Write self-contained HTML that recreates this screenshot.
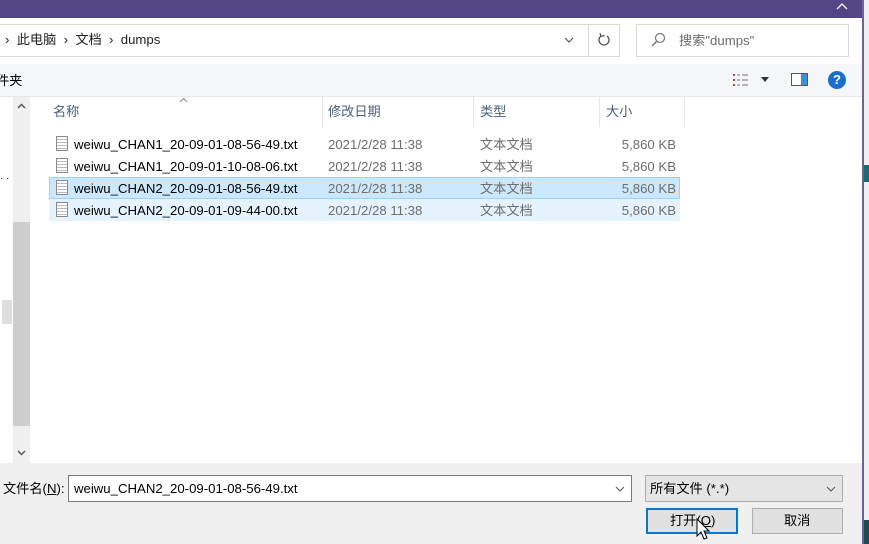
<!DOCTYPE html>
<html><head><meta charset="utf-8"><style>
*{margin:0;padding:0;box-sizing:border-box}
body{width:869px;height:544px;overflow:hidden;background:#fff;font-family:"Liberation Sans","Noto Sans CJK SC",sans-serif;font-size:13.2px;line-height:16px;color:#000;position:relative}
.a{position:absolute;white-space:nowrap}
.row{position:absolute;left:49px;width:631px;height:22px}
.row span{position:absolute;top:4px;white-space:nowrap}
.g{color:#6d6d6d}
.ic{position:absolute;left:7px;top:3px;width:12px;height:15px;border:1px solid #8a8a8a;background:repeating-linear-gradient(#fff 0 2px,#bbb 2px 3px);}
</style></head><body>
<div class="a" style="left:0;top:0;width:862px;height:18px;background:#544587"></div>
<svg class="a" style="left:836px;top:2px" width="12" height="8"><path d="M1 7 L6 2 L11 7" fill="none" stroke="#fff" stroke-width="1.3"/></svg>
<div class="a" style="left:862px;top:0;width:7px;height:544px;background:#f0f0f0;border-left:2px solid #6f5ea0"></div>
<div class="a" style="left:864px;top:165px;width:5px;height:17px;background:#1e6a72"></div>
<div class="a" style="left:864px;top:520px;width:5px;height:24px;background:#1e4a50"></div>
<div class="a" style="left:0;top:18px;width:862px;height:46px;background:#fff"></div>
<div class="a" style="left:-2px;top:24px;width:622px;height:33px;border:1px solid #d9d9d9"></div>
<div class="a" style="left:588px;top:24px;width:1px;height:33px;background:#d9d9d9"></div>
<div class="a" style="left:5px;top:32px;color:#222">›&nbsp; 此电脑 &nbsp;› &nbsp;文档 &nbsp;› &nbsp;dumps</div>
<svg class="a" style="left:564px;top:37px" width="10" height="7"><path d="M1 1 L5 5 L9 1" fill="none" stroke="#555" stroke-width="1.2"/></svg>
<svg class="a" style="left:597px;top:32px" width="14" height="16"><path d="M10 4 A5 5 0 1 1 4 4" fill="none" stroke="#555" stroke-width="1.3"/><path d="M3 1 L4 4.5 L7.5 3.5" fill="none" stroke="#555" stroke-width="1.2"/></svg>
<div class="a" style="left:636px;top:24px;width:213px;height:33px;border:1px solid #d9d9d9"></div>
<svg class="a" style="left:650px;top:32px" width="16" height="16"><circle cx="10" cy="6" r="4.5" fill="none" stroke="#777" stroke-width="1.2"/><path d="M7 9 L2 14" stroke="#777" stroke-width="1.4"/></svg>
<div class="a" style="left:679px;top:33px;color:#6d6d6d">搜索"dumps"</div>
<div class="a" style="left:0;top:64px;width:862px;height:33px;background:#f5f6f7;border-bottom:1px solid #e8e8e8"></div>
<div class="a" style="left:-4px;top:73px">件夹</div>
<svg class="a" style="left:733px;top:73px" width="18" height="14"><g fill="#c44"><rect x="0" y="1" width="2" height="2"/><rect x="0" y="6" width="2" height="2"/><rect x="0" y="11" width="2" height="2"/></g><g stroke="#777"><path d="M4 2h3M9 2h6M4 7h3M9 7h6M4 12h3M9 12h6"/></g></svg>
<div class="a" style="left:761px;top:77px;border:4px solid transparent;border-top:5px solid #333"></div>
<div class="a" style="left:791px;top:73px;width:17px;height:13px;border:1px solid #555;background:linear-gradient(90deg,#fff 0 9px,#3b8fdc 9px)"></div>
<div class="a" style="left:828px;top:71px;width:18px;height:18px;border-radius:50%;background:#1a6fce;color:#fff;font-weight:bold;font-size:13px;text-align:center;line-height:18px">?</div>
<div class="a" style="left:0;top:97px;width:33px;height:366px;background:#fff"></div>
<div class="a" style="left:13px;top:97px;width:17px;height:366px;background:#f0f0f0"></div>
<div class="a" style="left:13px;top:222px;width:17px;height:204px;background:#cdcdcd"></div>
<svg class="a" style="left:17px;top:103px" width="9" height="6"><path d="M1 5 L4.5 1.5 L8 5" fill="none" stroke="#555" stroke-width="1.5"/></svg>
<svg class="a" style="left:17px;top:450px" width="9" height="6"><path d="M1 1 L4.5 4.5 L8 1" fill="none" stroke="#555" stroke-width="1.5"/></svg>
<div class="a" style="left:2px;top:300px;width:10px;height:24px;background:#ddd"></div>
<div class="a" style="left:0;top:171px;font-size:10px">· ·</div>
<svg class="a" style="left:179px;top:97px" width="9" height="6"><path d="M1 5 L4.5 1.5 L8 5" fill="none" stroke="#888" stroke-width="1"/></svg>
<div class="a" style="left:53px;top:104px;color:#4c607a">名称</div>
<div class="a" style="left:322px;top:97px;width:1px;height:30px;background:#e5e5e5"></div>
<div class="a" style="left:328px;top:104px;color:#4c607a">修改日期</div>
<div class="a" style="left:473px;top:97px;width:1px;height:30px;background:#e5e5e5"></div>
<div class="a" style="left:480px;top:104px;color:#4c607a">类型</div>
<div class="a" style="left:599px;top:97px;width:1px;height:30px;background:#e5e5e5"></div>
<div class="a" style="left:606px;top:104px;color:#4c607a">大小</div>
<div class="a" style="left:684px;top:97px;width:1px;height:30px;background:#e5e5e5"></div>
<div class="row" style="top:133px"><i class="ic"></i><span style="left:25px">weiwu_CHAN1_20-09-01-08-56-49.txt</span><span class="g" style="left:279px">2021/2/28 11:38</span><span class="g" style="left:431px">文本文档</span><span class="g" style="right:4px">5,860 KB</span></div>
<div class="row" style="top:155px"><i class="ic"></i><span style="left:25px">weiwu_CHAN1_20-09-01-10-08-06.txt</span><span class="g" style="left:279px">2021/2/28 11:38</span><span class="g" style="left:431px">文本文档</span><span class="g" style="right:4px">5,860 KB</span></div>
<div class="row" style="top:177px;background:#cce8ff;border:1px solid #99d1ff"><i class="ic" style="left:6px;top:2px"></i><span style="left:24px;top:3px">weiwu_CHAN2_20-09-01-08-56-49.txt</span><span class="g" style="left:278px;top:3px">2021/2/28 11:38</span><span class="g" style="left:430px;top:3px">文本文档</span><span class="g" style="right:3px;top:3px">5,860 KB</span></div>
<div class="row" style="top:199px;background:#e5f3ff"><i class="ic"></i><span style="left:25px">weiwu_CHAN2_20-09-01-09-44-00.txt</span><span class="g" style="left:279px">2021/2/28 11:38</span><span class="g" style="left:431px">文本文档</span><span class="g" style="right:4px">5,860 KB</span></div>
<div class="a" style="left:0;top:463px;width:862px;height:81px;background:#f0f0f0"></div>
<div class="a" style="left:3px;top:481px">文件名(<u>N</u>):</div>
<div class="a" style="left:68px;top:475px;width:564px;height:27px;background:#fff;border:1px solid #7a7a7a"></div>
<div class="a" style="left:74px;top:481px">weiwu_CHAN2_20-09-01-08-56-49.txt</div>
<svg class="a" style="left:615px;top:486px" width="10" height="7"><path d="M1 1 L5 5 L9 1" fill="none" stroke="#555" stroke-width="1"/></svg>
<div class="a" style="left:645px;top:475px;width:198px;height:27px;background:#e5e5e5;border:1px solid #adadad"></div>
<div class="a" style="left:650px;top:481px">所有文件 (*.*)</div>
<svg class="a" style="left:826px;top:486px" width="10" height="7"><path d="M1 1 L5 5 L9 1" fill="none" stroke="#555" stroke-width="1"/></svg>
<div class="a" style="left:646px;top:508px;width:92px;height:26px;background:#e1e1e1;border:2px solid #0078d7"></div>
<div class="a" style="left:670px;top:513px">打开(<u>O</u>)</div>
<div class="a" style="left:752px;top:508px;width:91px;height:26px;background:#e1e1e1;border:1px solid #adadad"></div>
<div class="a" style="left:784px;top:513px">取消</div>
<svg class="a" style="left:696px;top:518px" width="14" height="24"><path d="M1 1 L1 18 L5 14 L8 21 L11 20 L8 13 L13 13 Z" fill="#fff" stroke="#000" stroke-width="1"/></svg>
</body></html>
